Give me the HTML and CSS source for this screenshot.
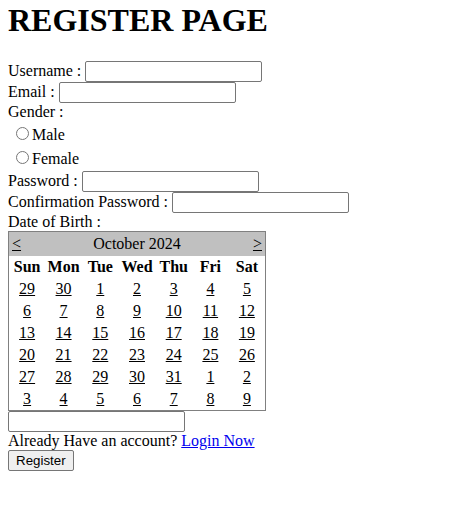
FILE: index.html
```html
<!DOCTYPE html>
<html>
<head>
<meta charset="utf-8">
<title>Register</title>
<link rel="stylesheet" href="styles.css">
</head>
<body class="page">
<form class="form">
  <h1 class="title">REGISTER PAGE</h1>
  Username : <input type="text" class="field"><br>
  Email : <input type="text" class="field"><br>
  Gender :
  <table class="radios">
    <tr><td><input type="radio" name="g" class="radio"><label>Male</label></td></tr>
    <tr><td><input type="radio" name="g" class="radio"><label>Female</label></td></tr>
  </table>
  Password : <input type="password" class="field"><br>
  Confirmation Password : <input type="password" class="field"><br>
  Date of Birth :
  <table class="cal">
    <tr><td colspan="7" class="cal-title">
      <table class="cal-nav">
        <tr>
          <td class="nav-l"><a class="day" href="#">&lt;</a></td>
          <td class="nav-c">October 2024</td>
          <td class="nav-r"><a class="day" href="#">&gt;</a></td>
        </tr>
      </table>
    </td></tr>
    <tr class="cal-head"><th>Sun</th><th>Mon</th><th>Tue</th><th>Wed</th><th>Thu</th><th>Fri</th><th>Sat</th></tr>
    <tr><td><a class="day" href="#">29</a></td><td><a class="day" href="#">30</a></td><td><a class="day" href="#">1</a></td><td><a class="day" href="#">2</a></td><td><a class="day" href="#">3</a></td><td><a class="day" href="#">4</a></td><td><a class="day" href="#">5</a></td></tr>
    <tr><td><a class="day" href="#">6</a></td><td><a class="day" href="#">7</a></td><td><a class="day" href="#">8</a></td><td><a class="day" href="#">9</a></td><td><a class="day" href="#">10</a></td><td><a class="day" href="#">11</a></td><td><a class="day" href="#">12</a></td></tr>
    <tr><td><a class="day" href="#">13</a></td><td><a class="day" href="#">14</a></td><td><a class="day" href="#">15</a></td><td><a class="day" href="#">16</a></td><td><a class="day" href="#">17</a></td><td><a class="day" href="#">18</a></td><td><a class="day" href="#">19</a></td></tr>
    <tr><td><a class="day" href="#">20</a></td><td><a class="day" href="#">21</a></td><td><a class="day" href="#">22</a></td><td><a class="day" href="#">23</a></td><td><a class="day" href="#">24</a></td><td><a class="day" href="#">25</a></td><td><a class="day" href="#">26</a></td></tr>
    <tr><td><a class="day" href="#">27</a></td><td><a class="day" href="#">28</a></td><td><a class="day" href="#">29</a></td><td><a class="day" href="#">30</a></td><td><a class="day" href="#">31</a></td><td><a class="day" href="#">1</a></td><td><a class="day" href="#">2</a></td></tr>
    <tr><td><a class="day" href="#">3</a></td><td><a class="day" href="#">4</a></td><td><a class="day" href="#">5</a></td><td><a class="day" href="#">6</a></td><td><a class="day" href="#">7</a></td><td><a class="day" href="#">8</a></td><td><a class="day" href="#">9</a></td></tr>
  </table>
  <input type="text" class="field"><br>
  Already Have an account? <a class="link" href="#">Login Now</a><br>
  <button type="button" class="btn">Register</button>
</form>
</body>
</html>
```

FILE: styles.css
```css
html, body {
  background: #ffffff;
}
.page {
  margin: 0 8px 8px 8px;
  font-family: "Liberation Serif", "Times New Roman", serif;
  font-size: 16px;
  color: #000000;
}
.form {
  margin: 0;
  padding-top: 0;
}
.title {
  font-size: 32px;
  font-weight: bold;
  margin: 2px 0 22px 0;
}
.field {
  box-sizing: border-box;
  width: 177px;
  height: 21px;
  border: 1px solid #767676;
  border-radius: 2px;
  padding: 1px 2px;
  margin: 0;
  font-family: "Liberation Sans", Arial, sans-serif;
  font-size: 13.333px;
  vertical-align: baseline;
}
.radios {
  border-spacing: 2px;
}
.radios td {
  padding: 1px;
}
.radio {
  margin: 3px 3px 0 5px;
  width: 13px;
  height: 13px;
}
.cal {
  border: 1px solid #808080;
  border-collapse: collapse;
  border-spacing: 0;
  width: 258px;
}
.cal td, .cal th {
  padding: 2px;
  text-align: center;
  width: 14%;
}
.cal .cal-title {
  background: #c0c0c0;
  width: auto;
}
.cal-nav {
  width: 100%;
  border-collapse: collapse;
}
.cal .cal-nav td {
  padding: 1px;
}
.cal .cal-nav .nav-l {
  width: 15%;
  text-align: left;
}
.cal .cal-nav .nav-c {
  width: 70%;
  text-align: center;
}
.cal .cal-nav .nav-r {
  width: 15%;
  text-align: right;
}
.cal-head th {
  font-weight: bold;
}
.day {
  color: #000000;
  text-decoration: underline;
}
.link {
  color: #0000ee;
  text-decoration: underline;
}
.btn {
  font-family: "Liberation Sans", Arial, sans-serif;
  font-size: 13.333px;
  background: #efefef;
  border: 1px solid #767676;
  border-radius: 2px;
  padding: 1px 7px;
  height: 21px;
  color: #000000;
}
```
